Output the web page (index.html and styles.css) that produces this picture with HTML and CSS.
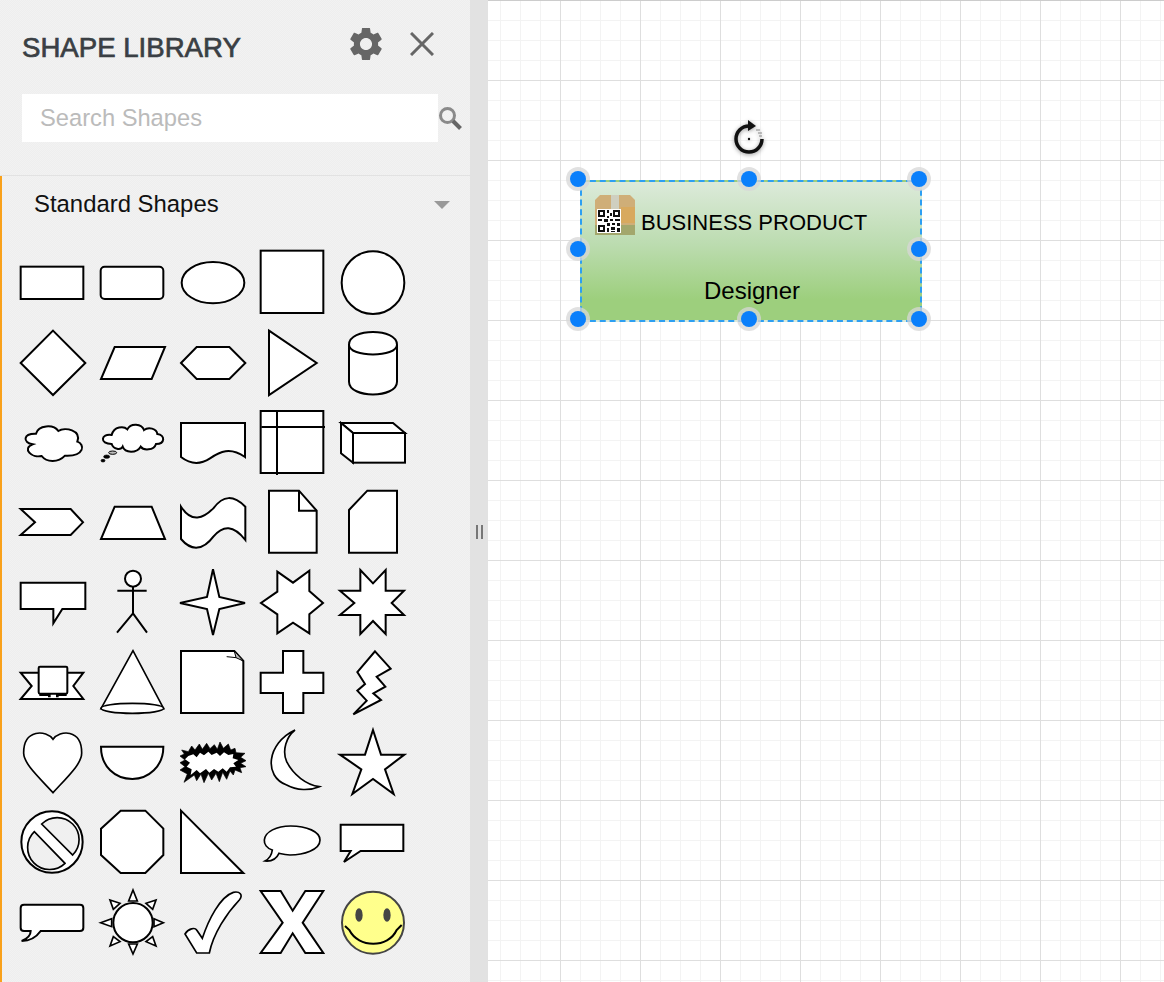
FILE: index.html
```html
<!DOCTYPE html>
<html lang="en">
<head>
<meta charset="utf-8">
<title>Shape Library</title>
<link rel="stylesheet" href="styles.css">
</head>
<body>
<aside class="panel">
  <header class="head">
    <h1 class="title">SHAPE LIBRARY</h1>
    <svg class="gear" viewBox="2.5 2.5 19 19"><path d="M19.14 12.94c.04-.3.06-.61.06-.94 0-.32-.02-.64-.07-.94l2.03-1.58c.18-.14.23-.41.12-.61l-1.92-3.32c-.12-.22-.37-.29-.59-.22l-2.39.96c-.5-.38-1.03-.7-1.62-.94l-.36-2.54c-.04-.24-.24-.41-.48-.41h-3.84c-.24 0-.43.17-.47.41l-.36 2.54c-.59.24-1.13.57-1.62.94l-2.39-.96c-.22-.08-.47 0-.59.22L2.74 8.87c-.12.21-.08.47.12.61l2.03 1.58c-.05.3-.09.63-.09.94s.02.64.07.94l-2.03 1.58c-.18.14-.23.41-.12.61l1.92 3.32c.12.22.37.29.59.22l2.39-.96c.5.38 1.03.7 1.62.94l.36 2.54c.05.24.24.41.48.41h3.84c.24 0 .44-.17.47-.41l.36-2.54c.59-.24 1.13-.56 1.62-.94l2.39.96c.22.08.47 0 .59-.22l1.92-3.32c.12-.22.07-.47-.12-.61l-2.01-1.58zM12 15.6c-1.98 0-3.6-1.62-3.6-3.6s1.62-3.6 3.6-3.6 3.6 1.62 3.6 3.6-1.62 3.6-3.6 3.6z"/></svg>
    <svg class="close" viewBox="0 0 24 24"><path d="M1 1 23 23M23 1 1 23"/></svg>
  </header>
  <div class="search">
    <div class="search-box">Search Shapes</div>
    <svg class="search-icon" viewBox="0 0 24 24"><circle cx="9.500" cy="9.500" r="7"/><path class="handle-line" d="M15 15 22.500 22.500"/></svg>
  </div>
  <section class="library">
    <div class="section-head">
      <span class="section-title">Standard Shapes</span>
      <span class="caret"></span>
    </div>
    <div class="shapes">
      <!-- row 1 -->
      <svg class="shape" viewBox="60 30 192 192"><rect x="62" y="80" width="188" height="97"/></svg>
      <svg class="shape" viewBox="300 30 192 192"><rect x="302" y="80" width="188" height="97" rx="12"/></svg>
      <svg class="shape" viewBox="540 30 192 192"><ellipse cx="639" cy="128" rx="94" ry="62"/></svg>
      <svg class="shape" viewBox="780 30 192 192"><rect x="782" y="32" width="188" height="187"/></svg>
      <svg class="shape" viewBox="1020 30 192 192"><circle cx="1119" cy="128" r="94"/></svg>
      <!-- row 2 -->
      <svg class="shape" viewBox="60 270 192 192"><polygon points="159,272 256,369 159,465 62,369"/></svg>
      <svg class="shape" viewBox="300 270 192 192"><polygon points="344,321 495,321 455,417 303,417"/></svg>
      <svg class="shape" viewBox="540 270 192 192"><polygon points="543,369 590,321 688,321 736,369 688,417 590,417"/></svg>
      <svg class="shape" viewBox="780 270 192 192"><polygon points="807,272 950,369 807,465"/></svg>
      <svg class="shape" viewBox="1020 270 192 192"><path d="M1047 314C1047 263 1191 263 1191 314V425C1191 476 1047 476 1047 425Z"/><path class="ln" d="M1047 314C1047 353 1191 353 1191 314"/></svg>
      <!-- row 3 -->
      <svg class="shape" viewBox="60 510 192 192"><path d="M98 613C68 608 68 580 108 581C115 555 160 552 175 573C195 560 245 570 232 605C255 612 255 650 195 647C175 668 140 668 125 648C95 655 65 625 98 613Z"/></svg>
      <svg class="shape" viewBox="300 510 192 192"><path d="M335 612C298 612 302 580 335 585C342 558 372 558 382 568C392 548 425 550 432 570C445 560 470 565 472 582C496 585 496 612 468 612C462 632 430 632 422 620C410 640 375 640 368 620C362 632 340 628 335 612Z"/><ellipse class="thin" cx="338" cy="638" rx="12" ry="5"/><ellipse class="dark" cx="320" cy="650" rx="9" ry="5"/><ellipse class="dark" cx="309" cy="662" rx="6" ry="4"/></svg>
      <svg class="shape" viewBox="540 510 192 192"><path d="M543 549H735V651C690 620 660 635 630 655C600 675 570 672 543 651Z"/></svg>
      <svg class="shape" viewBox="780 510 192 192"><rect x="782" y="513" width="188" height="186"/><path class="ln" d="M784 561H975M831 513V705"/></svg>
      <svg class="shape" viewBox="1020 510 192 192"><path d="M1023 549H1179L1215 579H1059Z"/><path d="M1023 549 1059 579V668L1023 640Z"/><rect x="1059" y="579" width="156" height="89"/></svg>
      <!-- row 4 -->
      <svg class="shape" viewBox="60 30 192 192"><polygon points="62,87 212,87 249,127 212,165 62,165 105,127"/></svg>
      <svg class="shape" viewBox="300 30 192 192"><polygon points="344,80 455,80 495,177 303,177"/></svg>
      <svg class="shape" viewBox="540 30 192 192"><path d="M543 80C575 130 610 115 640 85C670 45 700 45 736 80V180C700 135 670 135 640 170C610 210 575 215 543 177Z"/></svg>
      <svg class="shape" viewBox="780 30 192 192"><path d="M807 32H897L950 92V218H807Z"/><path class="ln" d="M897 32V92H950"/></svg>
      <svg class="shape" viewBox="1020 30 192 192"><polygon points="1102,32 1191,32 1191,218 1047,218 1047,90"/></svg>
      <!-- row 5 -->
      <svg class="shape" viewBox="60 270 192 192"><polygon points="62,308 256,308 256,387 187,387 160,430 160,387 62,387"/></svg>
      <svg class="shape" viewBox="300 270 192 192"><circle cx="399" cy="296" r="24"/><path class="ln" d="M399 320V400M352 332H440M351 458 399 400 441 458"/></svg>
      <svg class="shape" viewBox="540 270 192 192"><polygon points="639,268 658,351 735,369 658,387 639,465 621,387 540,369 621,351"/></svg>
      <svg class="shape" viewBox="780 270 192 192"><polygon points="832,275 879,308 928,272 928,333 969,369 928,403 928,460 879,428 832,460 832,403 783,369 832,335"/></svg>
      <svg class="shape" viewBox="1020 270 192 192"><polygon points="1081,270 1119,310 1157,270 1157,332 1212,332 1175,369 1212,405 1157,405 1157,462 1119,423 1081,462 1081,405 1020,405 1063,369 1020,332 1081,332"/></svg>
      <!-- row 6 -->
      <svg class="shape" viewBox="60 510 192 192"><polygon points="62,578 250,578 220,618 250,657 62,657 95,618"/><path class="fold" d="M118 644H148V652M172 652V644H200"/><rect x="116" y="560" width="86" height="81" rx="4"/></svg>
      <svg class="shape" viewBox="300 510 192 192"><polygon class="mid" points="399,512 303,686 491,686"/><ellipse class="mid" cx="397" cy="685" rx="94" ry="15"/></svg>
      <svg class="shape" viewBox="540 510 192 192"><path d="M543 513H703L730 543V699H543Z"/><path class="thin" d="M680 530 708 533 703 513 730 543 708 533"/></svg>
      <svg class="shape" viewBox="780 510 192 192"><polygon points="849,513 910,513 910,578 970,578 970,639 910,639 910,699 849,699 849,639 782,639 782,578 849,578"/></svg>
      <svg class="shape" viewBox="1020 510 192 192"><polygon points="1125,514 1172,566 1130,590 1156,620 1120,640 1143,660 1060,703 1100,662 1072,632 1095,612 1072,576"/></svg>
      <!-- row 7 -->
      <svg class="shape" viewBox="60 30 192 192"><path class="mid" d="M159 58C140 30 70 25 71 100C72 130 110 165 159 218C208 165 245 130 245 100C246 25 178 30 159 58Z"/></svg>
      <svg class="shape" viewBox="300 30 192 192"><path d="M303 80H490C490 140 445 177 397 177C345 177 303 140 303 80Z"/></svg>
      <svg class="shape" viewBox="540 30 192 192"><polygon class="dark" points="545,90 565,95 575,78 585,90 598,72 607,88 620,70 630,86 643,74 652,88 660,66 670,85 685,72 692,90 705,85 708,98 735,100 722,112 738,122 722,130 738,140 720,143 725,158 705,150 700,165 690,153 680,178 668,157 658,185 648,160 635,180 625,160 612,188 603,162 590,182 583,165 552,187 562,162 540,150 555,140 540,128 555,120 540,108 553,102"/><polygon class="plain" points="565,108 580,103 590,112 600,98 612,106 625,95 635,105 650,98 660,108 672,97 685,105 700,102 698,115 715,120 700,130 708,140 690,142 680,155 668,145 655,155 642,147 628,158 618,147 600,160 590,150 572,165 575,148 560,140 570,128 555,118"/></svg>
      <svg class="shape" viewBox="780 30 192 192"><path class="mid" d="M885 30C800 70 790 170 860 195C890 212 930 212 958 200C920 195 880 165 860 125C845 90 860 50 885 30Z"/></svg>
      <svg class="shape" viewBox="1020 30 192 192"><polygon points="1119,30 1143,104 1213,104 1155,148 1181,222 1119,177 1057,222 1084,148 1020,104 1095,104"/></svg>
      <!-- row 8 -->
      <svg class="shape" viewBox="60 270 192 192"><circle cx="156" cy="366" r="92"/><path class="hole" d="M125 312A62 62 0 0 1 218 405Z"/><path class="hole" d="M103 335A62 62 0 0 0 195 430Z"/></svg>
      <svg class="shape" viewBox="300 270 192 192"><polygon points="362,272 436,272 490,326 490,405 436,459 362,459 303,405 303,326"/></svg>
      <svg class="shape" viewBox="540 270 192 192"><polygon points="543,272 730,459 543,459"/></svg>
      <svg class="shape" viewBox="780 270 192 192"><path class="mid" d="M872 318C920 318 960 335 960 360C960 390 910 405 870 405C855 405 845 402 837 400C830 415 815 425 795 423C810 415 815 405 817 390C800 385 792 372 793 360C795 335 830 318 872 318Z"/></svg>
      <svg class="shape" viewBox="1020 270 192 192"><polygon points="1022,314 1210,314 1210,393 1082,393 1032,426 1052,393 1022,393"/></svg>
      <!-- row 9 -->
      <svg class="shape" viewBox="60 510 192 192"><path d="M72 554H240Q250 554 250 564V623Q250 633 240 633H122C110 650 95 663 65 663C85 655 92 645 92 633H72Q62 633 62 623V564Q62 554 72 554Z"/></svg>
      <svg class="shape" viewBox="300 510 192 192"><circle cx="399" cy="608" r="59"/><polygon class="mid" points="399,510 412,543 386,543"/><polygon class="mid" points="399,702 412,672 386,672"/><polygon class="mid" points="302,608 335,596 335,620"/><polygon class="mid" points="490,608 462,596 462,620"/><polygon class="mid" points="330,540 360,550 340,568"/><polygon class="mid" points="468,540 438,550 458,568"/><polygon class="mid" points="330,678 340,650 360,665"/><polygon class="mid" points="468,678 458,650 438,665"/></svg>
      <svg class="shape" viewBox="540 510 192 192"><path class="mid" d="M555 642C565 625 585 622 590 630L607 655C625 600 660 530 700 517C720 513 730 525 718 540C680 580 640 640 628 699H590Z"/></svg>
      <svg class="shape" viewBox="780 510 192 192"><polygon points="782,513 842,513 878,572 916,513 970,513 908,608 970,699 916,699 878,640 842,699 782,699 848,608"/></svg>
      <svg class="shape" viewBox="1020 510 192 192"><circle class="face" cx="1119" cy="608" r="93"/><ellipse class="eye" cx="1077" cy="585" rx="11" ry="20"/><ellipse class="eye" cx="1161" cy="585" rx="11" ry="20"/><path class="ln" d="M1035 618 1048 630C1075 685 1165 685 1190 630L1205 615"/></svg>
    </div>
  </section>
</aside>
<div class="divider"><span class="grip"></span></div>
<main class="canvas">
  <svg class="rotate" viewBox="0 0 40 40"><path class="rotate-arc" d="M20 7A13 13 0 1 0 33 20"/><polygon class="rotate-fill" points="19,1 27,7 19,12"/><path class="rotate-tick" d="M27 11h4M29 14h4M30 17h3"/><circle class="rotate-fill" cx="20" cy="20" r="1.200"/></svg>
  <div class="node">
    <div class="node-row">
      <svg class="pack" viewBox="0 0 40 40">
        <polygon class="pack-box" points="5,0 35,0 40,5 40,40 0,40 0,5"/>
        <rect class="pack-tape" x="16" y="0" width="8" height="14"/>
        <rect class="pack-right" x="26" y="12" width="14" height="16"/>
        <rect class="pack-foot" x="0" y="30" width="40" height="10"/>
        <rect class="pack-qr" x="2" y="14" width="24" height="24"/>
        <path class="pack-code" d="M3 15h7v7H3zM5 17v3h3v-3zM18 15h7v7h-7zM20 17v3h3v-3zM3 30h7v7H3zM5 32v3h3v-3zM12 15h2v3h-2zM15 18h2v3h-2zM12 21h2v2h-2zM3 24h4v2H3zM9 24h4v3H9zM15 24h3v2h-3zM20 24h5v2h-5zM12 28h3v3h-3zM17 28h3v2h-3zM22 28h3v3h-3zM12 33h2v4h-2zM16 32h4v3h-4zM22 33h3v4h-3zM16 36h4v1h-4z"/>
      </svg>
      <span class="node-name">BUSINESS PRODUCT</span>
    </div>
    <div class="node-role">Designer</div>
  </div>
  <span class="dot d-tl"></span>
  <span class="dot d-tc"></span>
  <span class="dot d-tr"></span>
  <span class="dot d-ml"></span>
  <span class="dot d-mr"></span>
  <span class="dot d-bl"></span>
  <span class="dot d-bc"></span>
  <span class="dot d-br"></span>
</main>
</body>
</html>
```
FILE: styles.css
```css
* { box-sizing: border-box; }
html, body { margin: 0; height: 100%; }
body {
  display: flex;
  width: 1164px;
  height: 982px;
  overflow: hidden;
  font-family: "Liberation Sans", Arial, sans-serif;
  background: #fff;
}

/* panel */
.panel {
  width: 470px;
  flex: none;
  display: flex;
  flex-direction: column;
  background: repeating-conic-gradient(#eeeeee 0 25%, #f2f2f2 0 50%) 0 0 / 2px 2px;
}
.head {
  height: 94px;
  display: flex;
  align-items: center;
  padding: 0 36px 0 22px;
}
.title {
  margin: 2px 0 0;
  font-size: 27.600px;
  font-weight: 400;
  -webkit-text-stroke: 0.7px #3a3f44;
  color: #3a3f44;
  flex: 1;
  white-space: nowrap;
}
.gear { width: 32px; height: 32px; fill: #666; margin: 0 28px 6px 0; }
.close {
  width: 24px;
  height: 24px;
  fill: none;
  stroke: #666;
  stroke-width: 3;
  margin-bottom: 6px;
}
.search {
  display: flex;
  align-items: center;
  padding-left: 22px;
  padding-bottom: 33px;
  border-bottom: 1px solid #e2e2e2;
}
.search-box {
  width: 416px;
  height: 48px;
  line-height: 48px;
  padding-left: 18px;
  background: #fff;
  color: #bbb;
  font-size: 23.700px;
}
.search-icon {
  width: 24px;
  height: 24px;
  fill: none;
  stroke: #8a8a8a;
  stroke-width: 3;
}
.handle-line { stroke: #666; stroke-width: 4; }
.library {
  flex: 1;
  border-left: 2px solid #f9a11b;
}
.section-head {
  height: 74px;
  padding: 12px 20px 0 32px;
  display: flex;
  justify-content: space-between;
}
.section-title {
  font-size: 23.900px;
  line-height: 32px;
  color: #111;
}
.caret {
  width: 0;
  height: 0;
  margin-top: 13px;
  border-left: 8px solid transparent;
  border-right: 8px solid transparent;
  border-top: 8px solid #999;
}
.shapes {
  display: grid;
  grid-template-columns: repeat(5, 80px);
  grid-auto-rows: 80px;
  padding-left: 18px;
}

/* traced shapes, drawn at 3x units */
.shape { width: 64px; height: 64px; overflow: visible; }
.shape * { fill: #fff; stroke: #000; stroke-width: 6; }
.shape .ln { fill: none; }
.shape .fold { fill: none; stroke-width: 8; }
.shape .mid { stroke-width: 5; }
.shape .thin { stroke-width: 3; fill: #bbb; }
.shape .dark { fill: #000; stroke-width: 2; }
.shape .plain { stroke: none; }
.shape .hole { fill: #f0f0f0; stroke-width: 5; }
.shape .face { fill: #ffff8c; stroke: #444; }
.shape .eye { fill: #444; stroke: none; }

/* divider */
.divider {
  width: 18px;
  flex: none;
  background: #e2e2e2;
  display: flex;
  justify-content: center;
  padding: 525px 0 0 0;
}
.grip {
  width: 7px;
  height: 14px;
  border-left: 2px solid #777;
  border-right: 2px solid #777;
}

/* canvas */
.canvas {
  position: relative;
  flex: 1;
  border-top: 1px solid #ccc;
  background-color: #fff;
  background-image:
    linear-gradient(#dedede 1px, transparent 1px),
    linear-gradient(90deg, #dedede 1px, transparent 1px),
    linear-gradient(#f3f3f3 1px, transparent 1px),
    linear-gradient(90deg, #f3f3f3 1px, transparent 1px);
  background-size: 80px 80px, 80px 80px, 20px 20px, 20px 20px;
  background-position: 0 -1px, 72px 0, 0 -1px, 12px 0;
}
.rotate {
  position: absolute;
  left: 241px;
  top: 118px;
  width: 40px;
  height: 40px;
  filter: drop-shadow(0 1px 2px rgba(0,0,0,.4));
}
.rotate-arc { fill: none; stroke: #111; stroke-width: 3.500; }
.rotate-fill { fill: #111; }
.rotate-tick { stroke: #888; stroke-width: 1.200; fill: none; }
.node {
  position: absolute;
  left: 92px;
  top: 179px;
  width: 342px;
  height: 142px;
  padding: 13px 13px 0;
  border: 2px dashed #2d9ff2;
  background: linear-gradient(#dceada, #bcdcb0 45%, #9dcf7d 85%, #9dcf7d);
  color: #000;
}
.node-row { display: flex; align-items: center; gap: 6px; height: 40px; }
.pack { width: 40px; height: 40px; flex: none; }
.pack-box { fill: #cfae78; }
.pack-tape { fill: #cfcfc0; }
.pack-right { fill: #d8a95e; }
.pack-foot { fill: #a3a76c; }
.pack-qr { fill: #fff; }
.pack-code { fill: #111; fill-rule: evenodd; }
.node-name { font-size: 22px; line-height: 26px; padding-top: 16px; white-space: nowrap; }
.node-role { font-size: 24px; line-height: 28px; margin-top: 42px; padding-left: 109px; }
.dot {
  position: absolute;
  width: 16px;
  height: 16px;
  border-radius: 50%;
  background: #0a7ffb;
  box-shadow: 0 0 0 4px rgba(215,215,215,.75);
}
.d-tl { left: 82px; top: 170px; }
.d-tc { left: 253px; top: 170px; }
.d-tr { left: 423px; top: 170px; }
.d-ml { left: 82px; top: 240px; }
.d-mr { left: 423px; top: 240px; }
.d-bl { left: 82px; top: 310px; }
.d-bc { left: 253px; top: 310px; }
.d-br { left: 423px; top: 310px; }
```
